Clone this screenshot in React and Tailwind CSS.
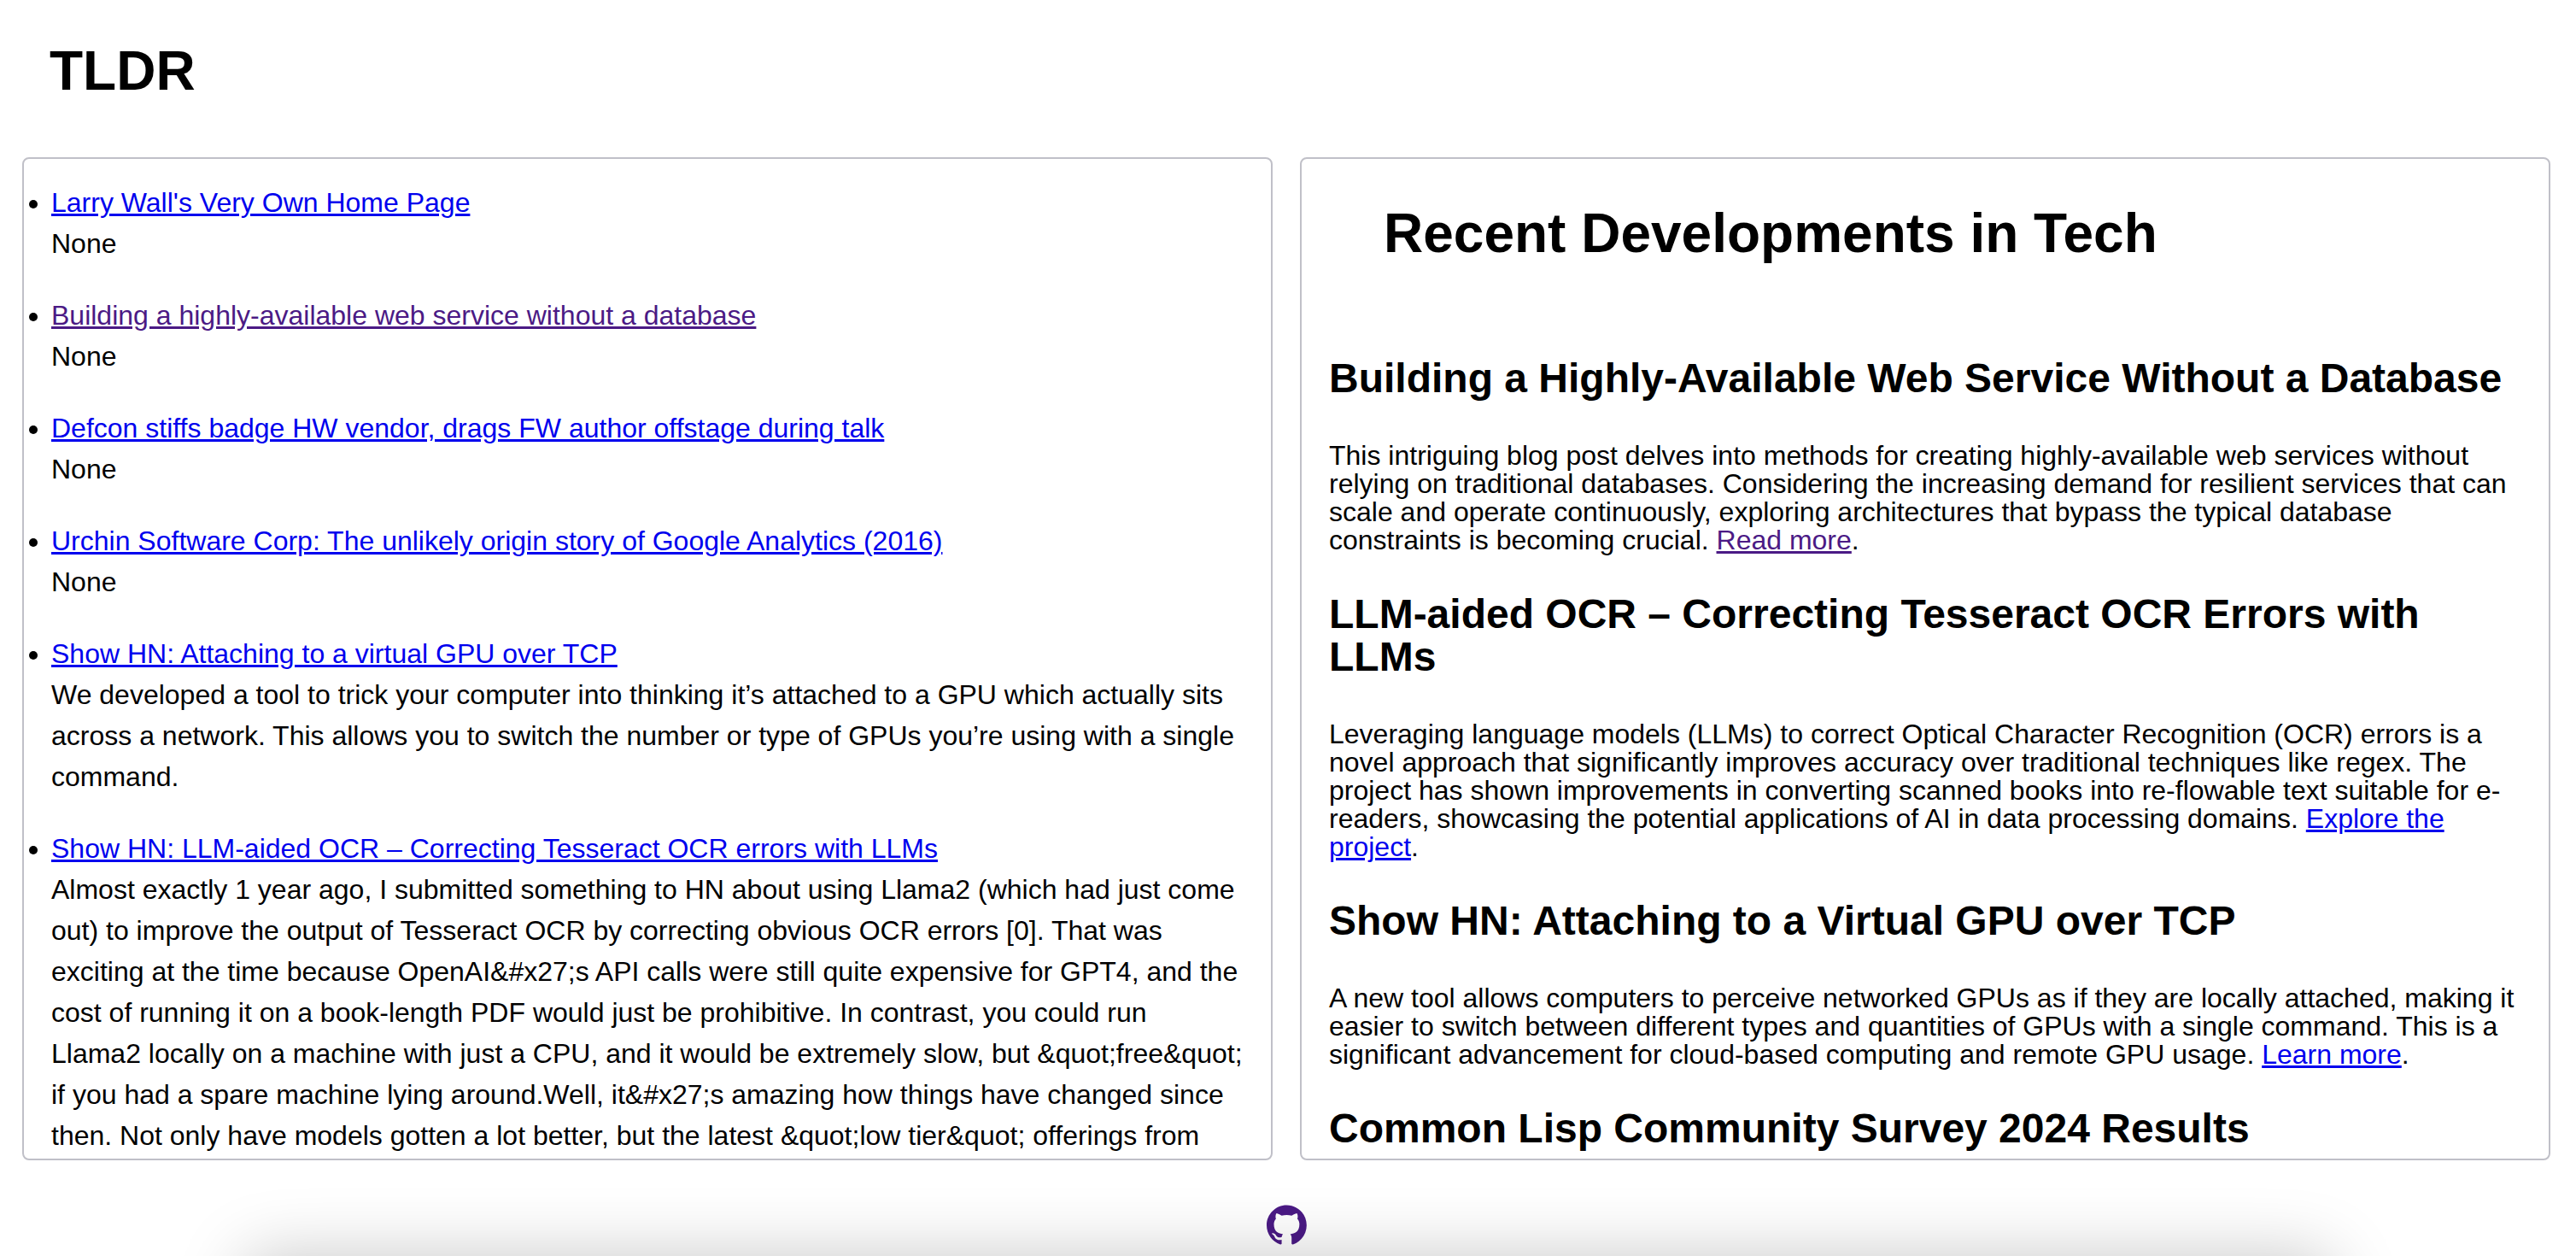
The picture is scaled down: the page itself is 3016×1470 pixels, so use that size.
import React from "react";

const LINK = "text-[#0000ee] underline";
const VISITED = "text-[#4b1a85] underline";

const stories = [
  { title: "Larry Wall's Very Own Home Page", text: "None" },
  { title: "Building a highly-available web service without a database", text: "None", visited: true },
  { title: "Defcon stiffs badge HW vendor, drags FW author offstage during talk", text: "None" },
  { title: "Urchin Software Corp: The unlikely origin story of Google Analytics (2016)", text: "None" },
  {
    title: "Show HN: Attaching to a virtual GPU over TCP",
    text: "We developed a tool to trick your computer into thinking it’s attached to a GPU which actually sits across a network. This allows you to switch the number or type of GPUs you’re using with a single command.",
  },
  {
    title: "Show HN: LLM-aided OCR – Correcting Tesseract OCR errors with LLMs",
    text: "Almost exactly 1 year ago, I submitted something to HN about using Llama2 (which had just come out) to improve the output of Tesseract OCR by correcting obvious OCR errors [0]. That was exciting at the time because OpenAI&#x27;s API calls were still quite expensive for GPT4, and the cost of running it on a book-length PDF would just be prohibitive. In contrast, you could run Llama2 locally on a machine with just a CPU, and it would be extremely slow, but &quot;free&quot; if you had a spare machine lying around.Well, it&#x27;s amazing how things have changed since then. Not only have models gotten a lot better, but the latest &quot;low tier&quot; offerings from",
  },
];

const sections = [
  {
    title: "Building a Highly-Available Web Service Without a Database",
    text: "This intriguing blog post delves into methods for creating highly-available web services without relying on traditional databases. Considering the increasing demand for resilient services that can scale and operate continuously, exploring architectures that bypass the typical database constraints is becoming crucial.",
    link: "Read more",
    visited: true,
  },
  {
    title: "LLM-aided OCR – Correcting Tesseract OCR Errors with LLMs",
    text: "Leveraging language models (LLMs) to correct Optical Character Recognition (OCR) errors is a novel approach that significantly improves accuracy over traditional techniques like regex. The project has shown improvements in converting scanned books into re-flowable text suitable for e-readers, showcasing the potential applications of AI in data processing domains.",
    link: "Explore the project",
  },
  {
    title: "Show HN: Attaching to a Virtual GPU over TCP",
    text: "A new tool allows computers to perceive networked GPUs as if they are locally attached, making it easier to switch between different types and quantities of GPUs with a single command. This is a significant advancement for cloud-based computing and remote GPU usage.",
    link: "Learn more",
  },
  { title: "Common Lisp Community Survey 2024 Results" },
];

const PANEL =
  "min-h-0 min-w-0 overflow-y-auto rounded-lg border-2 border-[#c0c0c8] px-8 [scrollbar-width:none]";

function StoryList() {
  return (
    <section className={PANEL} aria-label="Stories">
      <ul className="list-disc pt-[27px] leading-[48px]">
        {stories.map((s) => (
          <li key={s.title} className="mb-9">
            <a href="#story" className={s.visited ? VISITED : LINK}>{s.title}</a>
            <p>{s.text}</p>
          </li>
        ))}
      </ul>
    </section>
  );
}

function Digest() {
  return (
    <section className={PANEL} aria-label="Digest">
      <h1 className="mx-16 mt-[54px] mb-28 text-[64px] leading-[66px] font-bold">
        Recent Developments in Tech
      </h1>
      {sections.map((s) => (
        <article key={s.title} className="mb-[45px]">
          <h2 className="mb-[49px] text-5xl leading-[50px] font-bold">{s.title}</h2>
          {s.text && (
            <p className="leading-[33px]">
              {s.text}{" "}
              <a href="#source" className={s.visited ? VISITED : LINK}>{s.link}</a>.
            </p>
          )}
        </article>
      ))}
    </section>
  );
}

export default function App() {
  return (
    <div className="relative flex h-screen flex-col overflow-hidden bg-white font-['Liberation_Sans',Arial,sans-serif] text-[32px] text-black">
      <header className="px-[58px] pt-[50px] pb-[68px]">
        <h1 className="text-[64px] leading-[66px] font-bold">TLDR</h1>
      </header>
      <main className="grid min-h-0 flex-1 grid-cols-2 grid-rows-1 gap-8 pr-[30px] pl-[26px]">
        <StoryList />
        <Digest />
      </main>
      <footer className="flex h-28 justify-center pt-[52px] pr-1">
        <a href="#github" aria-label="GitHub" className="size-[47px] text-[#4b1a85]">
          <svg viewBox="0 0 98 96" className="size-full" fill="currentColor" aria-hidden="true">
            <path
              fillRule="evenodd"
              clipRule="evenodd"
              d="M48.854 0C21.839 0 0 22 0 49.217c0 21.756 13.993 40.172 33.405 46.69 2.427.49 3.316-1.059 3.316-2.362 0-1.141-.08-5.052-.08-9.127-13.59 2.934-16.42-5.867-16.42-5.867-2.184-5.704-5.42-7.17-5.42-7.17-4.448-3.015.324-3.015.324-3.015 4.934.326 7.523 5.052 7.523 5.052 4.367 7.496 11.404 5.378 14.235 4.074.404-3.178 1.699-5.378 3.074-6.6-10.839-1.141-22.243-5.378-22.243-24.283 0-5.378 1.94-9.778 5.014-13.2-.485-1.222-2.184-6.275.486-13.038 0 0 4.125-1.304 13.426 5.052a46.97 46.97 0 0 1 12.214-1.63c4.125 0 8.33.571 12.213 1.63 9.302-6.356 13.427-5.052 13.427-5.052 2.67 6.763.97 11.816.485 13.038 3.155 3.422 5.015 7.822 5.015 13.2 0 18.905-11.404 23.06-22.324 24.283 1.78 1.548 3.316 4.481 3.316 9.126 0 6.6-.08 11.897-.08 13.526 0 1.304.89 2.853 3.316 2.364 19.412-6.52 33.405-24.935 33.405-46.691C97.707 22 75.788 0 48.854 0z"
            />
          </svg>
        </a>
      </footer>
      <div
        aria-hidden="true"
        className="pointer-events-none absolute inset-x-[286px] top-full h-40 rounded-[20px] shadow-[0_0_80px_0_rgba(0,0,0,0.22)]"
      />
    </div>
  );
}
